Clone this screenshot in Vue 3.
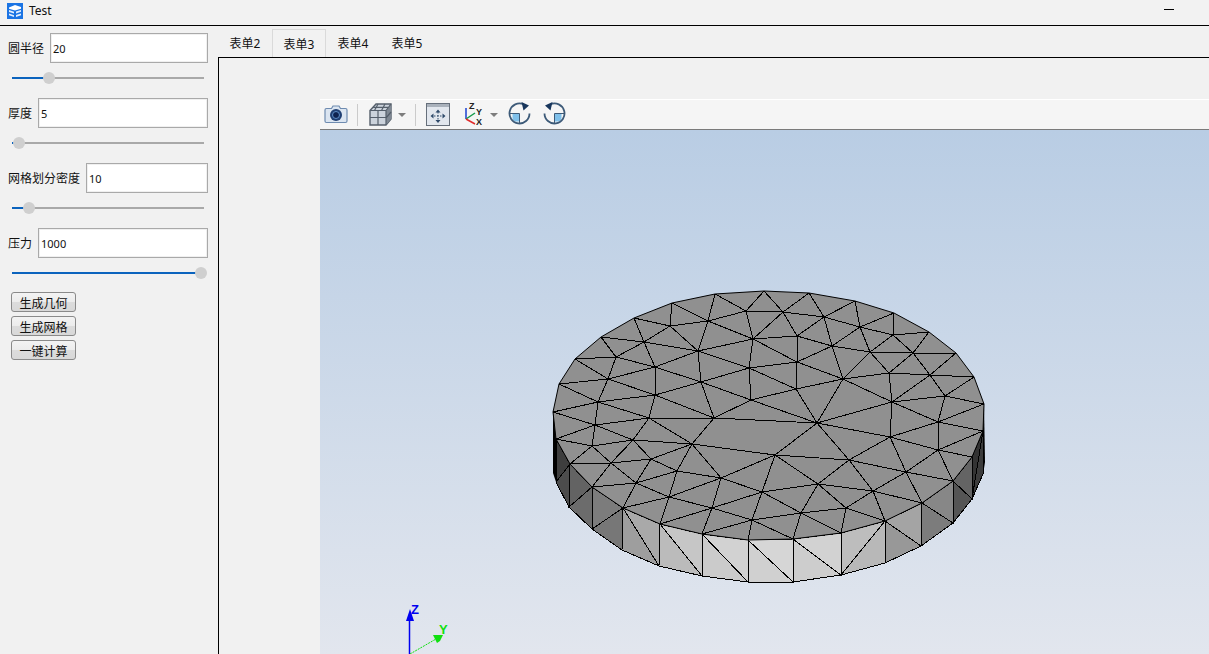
<template>
  <div class="window">
    <header class="titlebar">
      <svg class="logo" width="16" height="16" viewBox="0 0 16 16">
        <rect width="16" height="16" fill="#1b74e4" />
        <path d="M2 4.500 8 2l6 2v1.800L8 7.500 2 5.800z" fill="#fff" />
        <path d="M2 7l5 1.700v1.800L2 9zM9 8.500l5-1.500v1.800l-5 1.600zM2 10.500l5 1.700V14l-5-1.700zM9 12l5-1.500v1.800L9 14z" fill="#e4f0ff" />
      </svg>
      <span class="app-title">Test</span>
      <span class="minimize"></span>
    </header>

    <div class="main">
      <aside class="side">
        <div v-for="f in fields" :key="f.label" class="field">
          <div class="field-row">
            <label>{{ f.label }}</label>
            <input :value="f.value" type="text" />
          </div>
          <div class="slider">
            <div class="slider-fill" :style="{ width: f.pos + 'px' }"></div>
            <div class="slider-thumb" :style="{ left: f.pos + 'px' }"></div>
          </div>
        </div>
        <div class="actions">
          <button v-for="b in buttons" :key="b">{{ b }}</button>
        </div>
      </aside>

      <section class="content">
        <nav class="tabs">
          <div v-for="t in tabs" :key="t" class="tab" :class="{ active: t === '表单3' }">{{ t }}</div>
        </nav>
        <div class="pane">
          <div class="viewer">
            <div class="toolbar">
              <!-- 相机 -->
              <svg class="tool" width="24" height="22" viewBox="0 0 24 22">
                <path d="M2.500 5.500h5l1.500-2.500h6l1.500 2.500h5a1.500 1.500 0 0 1 1.500 1.500v11a1.500 1.500 0 0 1-1.500 1.500h-19a1.500 1.500 0 0 1-1.500-1.500v-11a1.500 1.500 0 0 1 1.500-1.500z" fill="#dbe5f1" stroke="#6e8bb0" stroke-width="1.200" />
                <circle cx="12" cy="12" r="6" fill="#1f3f73" />
                <circle cx="12" cy="12" r="3.500" fill="#0e2350" stroke="#5f8fc8" />
              </svg>
              <i class="sep s1"></i>
              <!-- 视图方块 -->
              <svg class="tool t-cube" width="23" height="23" viewBox="0 0 23 23">
                <path d="M1 7.500 7 1h15v15l-5 6H1z" fill="#ccd3dc" stroke="#555f6b" stroke-width="1.400" />
                <path d="M17 7.500 22 1v15l-5 6z" fill="#7f8893" />
                <path d="M1 7.500h16V22M17 7.500 22 1M1 14.500h16M9 7.500V22M17 15l5-6M9 1 5.500 7.500M16 1l-3.500 6.500M4 4.300h15" fill="none" stroke="#555f6b" stroke-width="1.200" />
              </svg>
              <i class="drop d1"></i>
              <i class="sep s2"></i>
              <!-- 适应窗口 -->
              <svg class="tool t-fit" width="24" height="23" viewBox="0 0 24 23">
                <rect x=".5" y=".5" width="23" height="22" fill="#e2e7ee" stroke="#666f7b" />
                <rect x="1" y="1" width="22" height="3" fill="#a9b1bb" />
                <path d="M12 6.500l2.500 3h-5zM12 20l-2.500-3h5zM4.500 13l3-2.500v5zM19.500 13l-3-2.500v5z" fill="#2f4a6a" />
                <path d="M8 13h8M12 9v8" stroke="#2f4a6a" stroke-dasharray="1.500 1.500" />
              </svg>
              <!-- 坐标轴 -->
              <svg class="tool t-axes" width="20" height="25" viewBox="0 0 20 25">
                <path d="M3 17V6" stroke="#1a3fd0" stroke-width="1.500" />
                <path d="M3 17l9-6" stroke="#169a4a" stroke-width="1.500" />
                <path d="M3 17l9 5" stroke="#e02a2a" stroke-width="1.500" />
                <text x="6" y="7" class="axis-mini">Z</text>
                <text x="13" y="13" class="axis-mini">Y</text>
                <text x="13" y="23" class="axis-mini">X</text>
              </svg>
              <i class="drop d2"></i>
              <!-- 旋转 -->
              <svg class="tool t-rot1" width="23" height="23" viewBox="0 0 23 23">
                <path d="M11.500 11.500H4.500v4a4 4 0 0 0 4 4h3z" fill="#7fc0ea" />
                <path d="M1.500 11.500h10v10" fill="none" stroke="#3d5a78" />
                <path d="M15.500 2.300A10 10 0 1 0 21.500 11.500" fill="none" stroke="#3d5a78" stroke-width="1.800" />
                <path d="M13.500 0l7.500 3.500-5.500 5z" fill="#18365c" />
              </svg>
              <svg class="tool t-rot2" width="23" height="23" viewBox="0 0 23 23">
                <path d="M11.500 11.500h7v4a4 4 0 0 1-4 4h-3z" fill="#7fc0ea" />
                <path d="M21.500 11.500h-10v10" fill="none" stroke="#3d5a78" />
                <path d="M7.500 2.300A10 10 0 1 1 1.500 11.500" fill="none" stroke="#3d5a78" stroke-width="1.800" />
                <path d="M9.500 0 2 3.500l5.500 5z" fill="#18365c" />
              </svg>
            </div>

            <div class="scene">
              <svg class="mesh" viewBox="320 130 889 524" width="889" height="524">
                <polygon points="553,412 984,404 985,462 983,475 556,482 553,473" fill="#000" />
                <polygon v-for="(t, i) in sideTris" :key="'s' + i" :points="t.pts" :fill="t.fill" stroke="#000" stroke-width="1" shape-rendering="crispEdges" />
                <polygon :points="topOutline" fill="#909090" stroke="#000" stroke-width="1" />
                <line v-for="(l, i) in meshLines" :key="i" :x1="l[0]" :y1="l[1]" :x2="l[2]" :y2="l[3]" stroke="#000" stroke-width="1" shape-rendering="crispEdges" />

                <!-- 左下角坐标系 -->
                <line x1="409.500" y1="654" x2="409.500" y2="616" stroke="#0000f0" stroke-width="1.500" />
                <path d="M410 609l4 12h-8z" fill="#0000f0" />
                <text x="411" y="614" class="axis-z">Z</text>
                <line x1="410" y1="654" x2="436" y2="639" stroke="#10e010" stroke-width="1" stroke-dasharray="2 1" />
                <path d="M433 635h10l-3 6-3 2z" fill="#10e010" />
                <text x="439" y="634" class="axis-y">Y</text>
              </svg>
            </div>
          </div>
        </div>
      </section>
    </div>
  </div>
</template>

<script setup>
const fields = [
  { label: "圆半径", value: "20", pos: 37 },
  { label: "厚度", value: "5", pos: 7 },
  { label: "网格划分密度", value: "10", pos: 17 },
  { label: "压力", value: "1000", pos: 189 },
]

const buttons = ["生成几何", "生成网格", "一键计算"]

const tabs = ["表单2", "表单3", "表单4", "表单5"]

// 顶面节点，坐标直接取窗口像素
const v = {
  G: [553, 412], F: [559, 384], E: [575, 359], D: [601, 337], C: [634, 318], B: [672, 303], A: [715, 294], K: [764, 291],
  a: [809, 293], b: [855, 301], c: [894, 313], d: [929, 332], e: [956, 353], f: [974, 377], g: [984, 404],
  aa: [983, 431], r1: [972, 457], r2: [953, 481], r3: [922, 503], r4: [885, 521], r5: [841, 533], r6: [793, 539],
  r7: [748, 540], r8: [702, 534], r9: [660, 524], r10: [623, 508], r11: [592, 487], r12: [570, 464], r13: [556, 439],
  H: [670, 326], I: [708, 321], J: [746, 311], L: [644, 342], M: [698, 351], N: [753, 339], O: [616, 357], P: [655, 367],
  Q: [749, 368], R: [608, 379], S: [701, 382], T: [655, 395], U: [751, 400], V: [598, 402], W: [649, 418], X: [714, 418], Y: [595, 425],
  i: [783, 312], j: [824, 317], k: [860, 327], l: [893, 335], m: [797, 336], n: [832, 346], o: [870, 352], p: [913, 353],
  q: [797, 362], r: [889, 373], s: [930, 375], t: [843, 379], u: [796, 389], w: [892, 402], x: [938, 422], y: [817, 423], z: [890, 437],
  vv: [945, 396],
  B1: [592, 446], C1: [633, 440], D1: [692, 444], F1: [611, 463], G1: [651, 459], H1: [677, 471], I1: [721, 478], K1: [636, 483],
  M1: [669, 497], N1: [712, 508], O1: [762, 492], Q1: [752, 520],
  c1: [775, 455], c2: [818, 484], c3: [849, 460], c4: [873, 491], c5: [801, 513], c6: [846, 508], c8: [906, 472], c9: [938, 450],
}

const edges = `B-H B-I C-H C-L H-I H-L H-M A-I A-J I-J I-M I-N J-N J-K J-i D-L D-O L-O L-P L-M M-P M-S M-Q M-N N-Q P-O O-E O-R E-R P-R P-T P-S
S-Q S-T S-X S-U Q-U F-R F-V R-V R-T V-T V-G V-Y V-W T-W T-X W-X W-Y G-Y Y-r13 Y-B1 Y-C1 W-C1 W-D1 X-D1 X-y U-X
K-i i-a i-j i-m a-j j-b j-k b-k k-c c-l k-l l-d j-n m-j m-n m-q N-m N-i N-q n-k n-o k-o l-o l-p o-p d-p p-e p-r o-r p-s e-s f-s f-vv s-vv s-r s-w r-t r-w t-o n-q n-t q-t Q-q
Q-u q-u U-u U-y t-u u-y t-y w-y t-w y-z w-z w-x x-vv vv-w vv-g x-g x-aa z-x x-c9 aa-c9
z-c3 z-c8 z-c9 c9-c8 c9-r2 c9-r1 c8-r2 c8-c4 c8-r3 c8-c3 c3-c4 c3-c2 c3-c1 c3-y c1-y c1-c2 c4-r3 c4-c6 c4-c2 c4-r4 c6-r4 c6-c5 c6-r5 c2-c6 c2-c5 c2-O1
c5-r6 c5-r5 c5-O1 c5-Q1 O1-c1 O1-I1 O1-N1 O1-Q1 I1-c1 D1-c1 Q1-r6 Q1-r7 Q1-N1 Q1-r8 N1-r8 N1-r9 N1-I1 N1-M1 M1-r9 M1-r10 M1-K1 M1-H1 M1-I1 H1-I1 H1-D1 H1-G1 H1-K1
I1-D1 D1-G1 D1-C1 C1-G1 C1-B1 C1-F1 G1-F1 G1-K1 F1-K1 F1-B1 F1-r11 F1-r12 K1-r10 K1-r11 B1-r12 B1-r13`

const meshLines = edges.trim().split(/\s+/).map((e) => {
  const [p, q] = e.split("-")
  return [...v[p], ...v[q]]
})

const rimOrder = "G F E D C B A K a b c d e f g aa r1 r2 r3 r4 r5 r6 r7 r8 r9 r10 r11 r12 r13".split(" ")
const topOutline = rimOrder.map((n) => v[n].join(",")).join(" ")

// 侧面：上边两点 + 下边两点，diag 表示对角线方向，颜色按面分
const sideFaces = [
  { a: [556, 439], b: [570, 464], c: [569, 507], d: [556, 482], fill: ["#3e3e3e", "#4c4c4c"], diag: "bd" },
  { a: [570, 464], b: [592, 487], c: [592, 529], d: [569, 507], fill: ["#636363", "#6c6c6c"], diag: "bd" },
  { a: [592, 487], b: [623, 508], c: [622, 550], d: [592, 529], fill: ["#7c7c7c", "#777"], diag: "bd" },
  { a: [623, 508], b: [660, 524], c: [659, 566], d: [622, 550], fill: ["#a9a9a9", "#9e9e9e"], diag: "ac" },
  { a: [660, 524], b: [702, 534], c: [702, 576], d: [659, 566], fill: ["#c6c6c6", "#bbb"], diag: "ac" },
  { a: [702, 534], b: [748, 540], c: [748, 582], d: [702, 576], fill: ["#d2d2d2", "#cbcbcb"], diag: "ac" },
  { a: [748, 540], b: [793, 539], c: [793, 582], d: [748, 582], fill: ["#d6d6d6", "#d0d0d0"], diag: "ac" },
  { a: [793, 539], b: [841, 533], c: [841, 575], d: [793, 582], fill: ["#d2d2d2", "#cdcdcd"], diag: "ac" },
  { a: [841, 533], b: [885, 521], c: [885, 563], d: [841, 575], fill: ["#bdbdbd", "#b8b8b8"], diag: "bd" },
  { a: [885, 521], b: [922, 503], c: [921, 546], d: [885, 563], fill: ["#a4a4a4", "#989898"], diag: "ac" },
  { a: [922, 503], b: [953, 481], c: [953, 523], d: [921, 546], fill: ["#878787", "#7c7c7c"], diag: "ac" },
  { a: [953, 481], b: [972, 457], c: [972, 499], d: [953, 523], fill: ["#646464", "#555"], diag: "ac" },
  { a: [972, 457], b: [983, 431], c: [983, 474], d: [972, 499], fill: ["#333", "#3c3c3c"], diag: "bd" },
]

const sideTris = sideFaces.flatMap((f) => {
  const s = (...ps) => ps.map((p) => p.join(",")).join(" ")
  return f.diag === "ac"
    ? [{ pts: s(f.a, f.b, f.c), fill: f.fill[0] }, { pts: s(f.a, f.c, f.d), fill: f.fill[1] }]
    : [{ pts: s(f.a, f.b, f.d), fill: f.fill[0] }, { pts: s(f.b, f.c, f.d), fill: f.fill[1] }]
})
</script>

<style>
html, body {
  margin: 0;
  overflow: hidden;
  background: #f1f1f1;
}
</style>

<style scoped>
.window {
  width: 1209px;
  height: 654px;
  background: #f1f1f1;
  font-family: "Noto Sans", "Noto Sans CJK SC", sans-serif;
  font-size: 12px;
  color: #111;
  display: flex;
  flex-direction: column;
  overflow: hidden;
}

.titlebar {
  height: 25px;
  flex: none;
  border-bottom: 1px solid #000;
  background: #f2f2f2;
  display: flex;
  align-items: center;
  padding: 0 7px;
  box-sizing: content-box;
}

.logo {
  margin-right: 6px;
  margin-top: -4px;
}

.app-title {
  margin-top: -5px;
}

.minimize {
  width: 10px;
  height: 1px;
  background: #000;
  margin-left: auto;
  margin-right: 28px;
  margin-top: -7px;
}

.main {
  flex: 1;
  display: flex;
  min-height: 0;
}

.side {
  width: 218px;
  flex: none;
  box-sizing: border-box;
  padding: 7px 10px 0 8px;
}

.field {
  height: 65px;
}

.field-row {
  display: flex;
  align-items: center;
  gap: 6px;
  height: 30px;
}

.field-row label {
  white-space: nowrap;
}

.field-row input {
  flex: 1;
  min-width: 0;
  height: 30px;
  box-sizing: border-box;
  border: 1px solid #a9a9a9;
  outline: 1px solid #f0f0f0;
  outline-offset: -2px;
  background: #fff;
  padding: 0 2px;
  font: inherit;
  font-size: 11px;
  color: #111;
}

.slider {
  position: relative;
  margin: 14px 4px 0;
  height: 2px;
  width: 192px;
  background: #a9a9a9;
}

.slider-fill {
  height: 2px;
  background: #0b63bd;
}

.slider-thumb {
  position: absolute;
  top: -5px;
  width: 12px;
  height: 12px;
  margin-left: -6px;
  border-radius: 50%;
  background: #cfcfcf;
}

.actions {
  margin: -1px 0 0 3px;
  display: flex;
  flex-direction: column;
  gap: 4px;
  align-items: flex-start;
}

.actions button {
  width: 65px;
  height: 20px;
  box-sizing: border-box;
  border: 1px solid #8a8a8a;
  border-radius: 3px;
  background: linear-gradient(#f3f3f3 0, #ececec 50%, #dcdcdc 51%, #d8d8d8 100%);
  padding: 1px 0 0;
  font: inherit;
  color: #111;
}

.content {
  flex: 1;
  min-width: 0;
  display: flex;
  flex-direction: column;
}

.tabs {
  height: 31px;
  flex: none;
  display: flex;
  align-items: flex-end;
}

.tab {
  width: 54px;
  height: 28px;
  box-sizing: border-box;
  text-align: center;
  line-height: 29px;
}

.tab.active {
  background: #f2f2f2;
  border: 1px solid #dadada;
  border-bottom: none;
}

.pane {
  flex: 1;
  min-height: 0;
  border-top: 1px solid #000;
  border-left: 1px solid #000;
  padding: 41px 0 0 101px;
  display: flex;
}

.viewer {
  flex: 1;
  min-width: 0;
  display: flex;
  flex-direction: column;
}

.toolbar {
  position: relative;
  height: 31px;
  flex: none;
  box-sizing: border-box;
  background: #f5f5f5;
  border-top: 1px solid #fff;
  border-bottom: 1px solid #7a7a7a;
}

.tool {
  position: absolute;
  top: 3px;
  left: 4px;
}

.t-cube {
  left: 49px;
}

.t-fit {
  left: 106px;
}

.t-axes {
  left: 143px;
  top: 2px;
}

.t-rot1 {
  left: 188px;
  top: 2px;
}

.t-rot2 {
  left: 223px;
  top: 2px;
}

.axis-mini {
  font-family: "Liberation Sans", sans-serif;
  font-size: 9px;
  font-weight: 700;
  fill: #222;
}

.sep {
  position: absolute;
  top: 4px;
  width: 1px;
  height: 22px;
  background: #cbcbcb;
}

.s1 {
  left: 37px;
}

.s2 {
  left: 95px;
}

.drop {
  position: absolute;
  top: 13px;
  border-left: 4px solid transparent;
  border-right: 4px solid transparent;
  border-top: 4px solid #7d7d7d;
}

.d1 {
  left: 78px;
}

.d2 {
  left: 170px;
}

.scene {
  flex: 1;
  min-height: 0;
  overflow: hidden;
  background: linear-gradient(#b9cde4, #e2e6ee);
}

.mesh {
  display: block;
}

.axis-z {
  font-family: "Liberation Sans", sans-serif;
  font-size: 13px;
  font-weight: 700;
  fill: #0000f0;
}

.axis-y {
  font-family: "Liberation Sans", sans-serif;
  font-size: 13px;
  font-weight: 700;
  fill: #10e010;
}
</style>
